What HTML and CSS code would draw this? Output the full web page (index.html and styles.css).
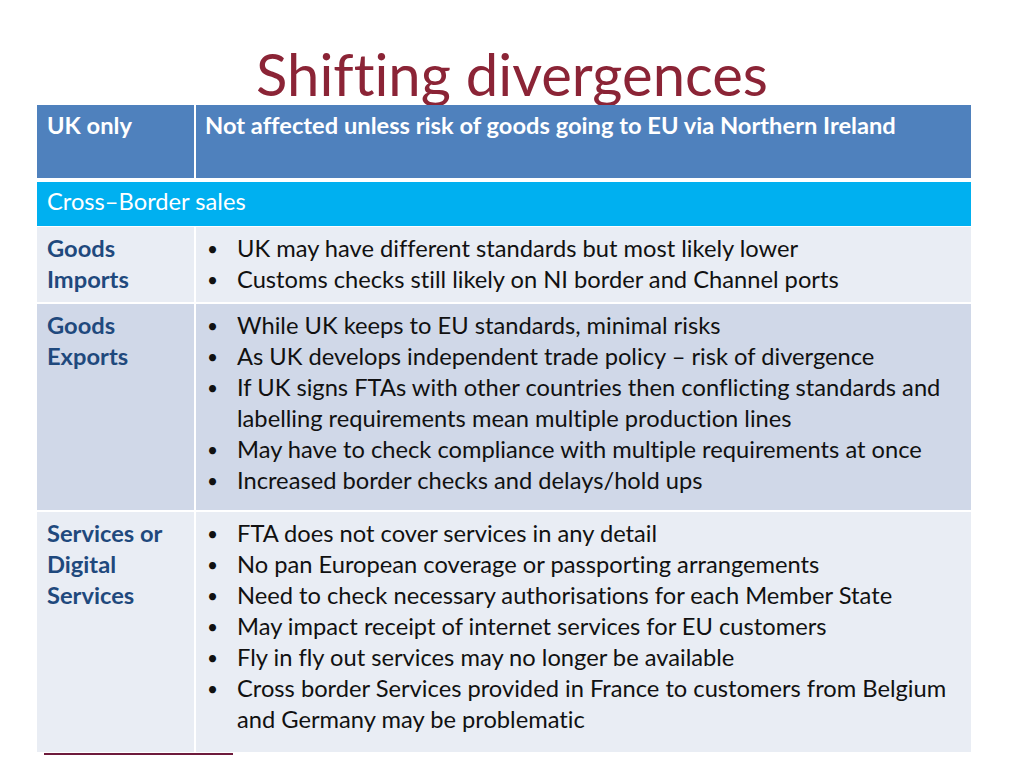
FILE: index.html
```html
<!DOCTYPE html>
<html lang="en">
<head>
<meta charset="utf-8">
<title>Shifting divergences</title>
<link rel="stylesheet" href="styles.css">
</head>
<body>
<div class="slide">
  <h1 class="title">Shifting divergences</h1>
  <div class="grid">
    <div class="row row-head">
      <div class="cell label">UK only</div>
      <div class="cell body">Not affected unless risk of goods going to EU via Northern Ireland</div>
    </div>
    <div class="row row-section">
      <div class="cell wide">Cross–Border sales</div>
    </div>
    <div class="row row-imports light">
      <div class="cell label">Goods<br>Imports</div>
      <div class="cell body">
        <ul class="bullets">
          <li>UK may have different standards but most likely lower</li>
          <li>Customs checks still likely on NI border and Channel ports</li>
        </ul>
      </div>
    </div>
    <div class="row row-exports dark">
      <div class="cell label">Goods<br>Exports</div>
      <div class="cell body">
        <ul class="bullets">
          <li>While UK keeps to EU standards, minimal risks</li>
          <li>As UK develops independent trade policy – risk of divergence</li>
          <li>If UK signs FTAs with other countries then conflicting standards and labelling requirements mean multiple production lines</li>
          <li>May have to check compliance with multiple requirements at once</li>
          <li>Increased border checks and delays/hold ups</li>
        </ul>
      </div>
    </div>
    <div class="row row-services light">
      <div class="cell label">Services or<br>Digital<br>Services</div>
      <div class="cell body">
        <ul class="bullets">
          <li>FTA does not cover services in any detail</li>
          <li>No pan European coverage or passporting arrangements</li>
          <li>Need to check necessary authorisations for each Member State</li>
          <li>May impact receipt of internet services for EU customers</li>
          <li>Fly in fly out services may no longer be available</li>
          <li>Cross border Services provided in France to customers from Belgium and Germany may be problematic</li>
        </ul>
      </div>
    </div>
  </div>
  <div class="underline"></div>
</div>
</body>
</html>
```
FILE: styles.css
```css
html, body {
  margin: 0;
  padding: 0;
  background: #ffffff;
}

.slide {
  width: 1024px;
  height: 768px;
  overflow: hidden;
  font-family: Lato, "Open Sans", "Liberation Sans", sans-serif;
  font-variant-ligatures: none;
  color: #111111;
}

.title {
  margin: 0;
  height: 105px;
  box-sizing: border-box;
  padding-top: 43px;
  text-align: center;
  font-weight: 400;
  font-size: 58px;
  line-height: 62px;
  color: #8B2436;
  white-space: nowrap;
}

.grid {
  margin-left: 37px;
  width: 934px;
  display: flex;
  flex-direction: column;
}

.row {
  display: flex;
  box-sizing: border-box;
}

.cell {
  box-sizing: border-box;
  font-size: 23.7px;
  line-height: 31px;
}

.cell.label {
  width: 159px;
  flex: none;
  border-right: 2px solid #ffffff;
  padding-left: 10px;
  font-weight: 700;
  color: #1F497D;
}

.cell.body {
  flex: 1;
  padding-left: 9px;
}

.cell.wide {
  flex: 1;
  padding-left: 10px;
  color: #ffffff;
}

.row-head {
  height: 77px;
  background: #4F81BD;
  border-bottom: 4px solid #ffffff;
  font-weight: 700;
}

.row-head .cell {
  padding-top: 5px;
  color: #ffffff;
}

.row-section {
  height: 45px;
  background: #00B0F0;
  border-bottom: 1px solid #ffffff;
}

.row-section .cell {
  padding-top: 4px;
}

.light { background: #E9EDF4; }
.dark { background: #D0D8E8; }

.row-imports { height: 77px; border-bottom: 2px solid #ffffff; }
.row-exports { height: 208px; border-bottom: 2px solid #ffffff; }
.row-services { height: 240px; }

.row-imports .cell,
.row-exports .cell,
.row-services .cell {
  padding-top: 6px;
}

.bullets {
  margin: 0;
  padding: 0 0 0 32px;
  list-style: none;
}

.bullets li {
  position: relative;
}

.bullets li::before {
  content: "•";
  position: absolute;
  left: -30px;
  top: 0;
  font-size: 19px;
}

.underline {
  margin-left: 44px;
  margin-top: 1px;
  width: 189px;
  height: 2px;
  background: #6E1B3C;
}
```
